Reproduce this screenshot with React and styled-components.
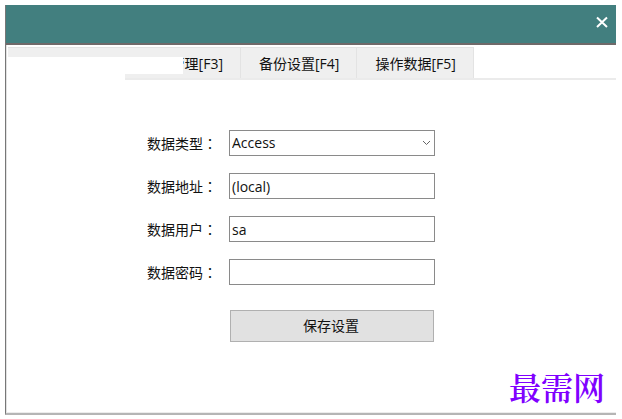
import React from 'react';
import styled, { createGlobalStyle } from 'styled-components';

const GlobalStyle = createGlobalStyle`
  * {
    box-sizing: border-box;
  }
  body {
    margin: 0;
    background: #fff;
    color: #111;
    font: 14px/20px "Open Sans", "Noto Sans CJK SC", sans-serif;
  }
`;

const Page = styled.div`
  display: flex;
  min-height: 100vh;
  padding: 5px 6px 4px 5px;
`;

const Window = styled.div`
  flex: 1;
  display: flex;
  flex-direction: column;
  border-left: 1px solid #777;
  border-bottom: 2px solid #b5b5b5;
`;

const TitleBar = styled.header`
  display: flex;
  align-items: center;
  justify-content: flex-end;
  height: 40px;
  padding: 0 8px 4px;
  background: #427f7f;
  border-bottom: 2px solid #6f6969;
`;

const Close = styled.button`
  display: flex;
  padding: 0;
  border: none;
  background: none;
  color: #fff;
`;

const Body = styled.main`
  flex: 1;
  display: flex;
  flex-direction: column;
  padding: 2px 0 0 1px;
  border-left: 1px solid #e2e2e2;
  border-bottom: 1px solid #ececec;
`;

const Tabs = styled.nav`
  position: relative;
  display: flex;
  height: 33px;
  border-bottom: 2px solid #ebebeb;
`;

const Tab = styled.button`
  width: ${(props) => (props.$wide ? '233px' : 'auto')};
  padding: 2px 17px 0 18px;
  border: solid #e3e3e3;
  border-width: 1px 1px 0 0;
  background: #efefef;
  color: inherit;
  font: inherit;
  text-align: right;
`;

const Cover = styled.div`
  position: absolute;
  top: 10px;
  left: 0;
  width: ${(props) => props.$width};
  height: ${(props) => props.$height};
  background: #fff;
`;

const Form = styled.form`
  display: flex;
  flex-direction: column;
  gap: 17px;
  padding: 50px 0 0 139px;
`;

const Row = styled.div`
  display: flex;
  align-items: center;
`;

const Label = styled.label`
  width: 82px;
`;

const Colon = styled.span`
  font-family: "Noto Sans CJK TC", sans-serif;
`;

const Field = styled.div`
  position: relative;
  width: 206px;
`;

const Input = styled.input`
  display: block;
  width: 100%;
  height: 26px;
  padding: 0 2px;
  border: 1px solid #8a8a8a;
  border-radius: 0;
  background: #fff;
  color: inherit;
  font: inherit;
  appearance: none;
`;

const Arrow = styled.svg`
  position: absolute;
  top: 10px;
  right: 4px;
  pointer-events: none;
`;

const Save = styled.button`
  width: 204px;
  height: 32px;
  margin: 8px 0 0 83px;
  padding: 0 2px 0 0;
  border: 1px solid #b0b0b0;
  background: #e1e1e1;
  color: inherit;
  font: inherit;
`;

const Brand = styled.div`
  margin: auto 11px 6px auto;
  color: #8000ff;
  font: 600 32px/40px "Noto Serif CJK SC", "Noto Sans CJK SC", serif;
`;

const fields = [
  { id: 'address', label: '数据地址', type: 'text', value: '(local)' },
  { id: 'user', label: '数据用户', type: 'text', value: 'sa' },
  { id: 'password', label: '数据密码', type: 'password', value: '' },
];

const App = () => (
  <Page>
    <GlobalStyle />
    <Window>
      <TitleBar>
        <Close type="button" aria-label="关闭">
          <svg width="12" height="12" viewBox="0 0 12 12" fill="none" stroke="currentColor">
            <path d="M1 1.5l10 9.5M11 1.5L1 11" strokeWidth="2" />
          </svg>
        </Close>
      </TitleBar>
      <Body>
        <Tabs>
          <Tab type="button" $wide>管理[F3]</Tab>
          <Tab type="button">备份设置[F4]</Tab>
          <Tab type="button">操作数据[F5]</Tab>
          <Cover $width="175px" $height="17px" />
          <Cover $width="117px" $height="23px" />
        </Tabs>
        <Form>
          <Row>
            <Label htmlFor="type">
              数据类型
              <Colon>：</Colon>
            </Label>
            <Field>
              <Input as="select" id="type" defaultValue="Access">
                <option>Access</option>
              </Input>
              <Arrow width="9" height="6" viewBox="0 0 9 6" fill="none" stroke="#666">
                <path d="M1 1l3.5 3.5L8 1" />
              </Arrow>
            </Field>
          </Row>
          {fields.map((field) => (
            <Row key={field.id}>
              <Label htmlFor={field.id}>
                {field.label}
                <Colon>：</Colon>
              </Label>
              <Field>
                <Input id={field.id} type={field.type} defaultValue={field.value} />
              </Field>
            </Row>
          ))}
          <Save type="button">保存设置</Save>
        </Form>
        <Brand>最需网</Brand>
      </Body>
    </Window>
  </Page>
);

export default App;
